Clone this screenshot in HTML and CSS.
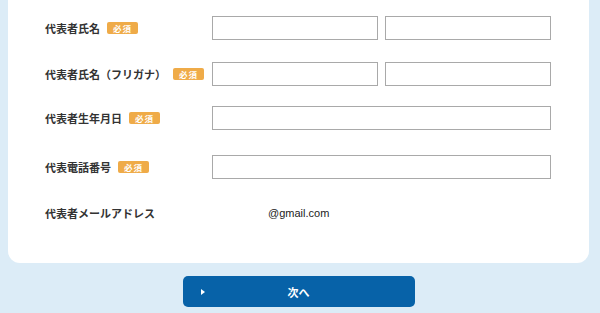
FILE: index.html
```html
<!DOCTYPE html>
<html lang="ja">
<head>
  <meta charset="UTF-8">
  <title>代表者情報</title>
  <link rel="stylesheet" href="styles.css">
</head>
<body>

<div class="form-card">
  <div class="form-row">
    <div class="label">代表者氏名<span class="required">必須</span></div>
    <div class="field split">
      <input type="text">
      <input type="text">
    </div>
  </div>

  <div class="form-row row-tight">
    <div class="label">代表者氏名（フリガナ）<span class="required">必須</span></div>
    <div class="field split">
      <input type="text">
      <input type="text">
    </div>
  </div>

  <div class="form-row row-loose">
    <div class="label">代表者生年月日<span class="required">必須</span></div>
    <div class="field">
      <input type="text">
    </div>
  </div>

  <div class="form-row">
    <div class="label">代表電話番号<span class="required">必須</span></div>
    <div class="field">
      <input type="text">
    </div>
  </div>

  <div class="form-row row-text">
    <div class="label">代表者メールアドレス</div>
    <div class="field value">@gmail.com</div>
  </div>
</div>

<div class="actions">
  <button class="next-btn"><span class="arrow"></span>次へ</button>
</div>

</body>
</html>
```

FILE: styles.css
```css
* {
  margin: 0; padding: 0; box-sizing: border-box;
}
body {
  font-family: "Noto Sans CJK JP", "Noto Sans", sans-serif;
  background: #dcecf7;
  color: #333;
  height: 313px;
  overflow: hidden;
}

.form-card {
  background: #fff;
  margin-left: 8px;
  width: 581px;
  height: 263px;
  padding: 16px 38px 0 37px;
  border-radius: 0 0 12px 12px;
}

.form-row {
  display: grid;
  grid-template-columns: 167px 1fr;
  align-items: center;
  height: 24px;
  margin-bottom: 22px;
}

.form-row.row-tight {
  margin-bottom: 20px;
}

.form-row.row-loose {
  margin-bottom: 25px;
}

.form-row.row-text {
  margin-top: 5px;
}

.label {
  font-size: 11px;
  font-weight: bold;
  display: flex;
  align-items: center;
  white-space: nowrap;
}

.required {
  display: inline-block;
  background: #efab48;
  color: #fff;
  font-size: 8.5px;
  line-height: 12px;
  height: 12px;
  padding: 0 6px;
  margin-left: 7px;
  border-radius: 2px;
  letter-spacing: 1px;
}

.field {
  display: flex;
  gap: 7px;
}

.field input {
  width: 100%;
  height: 24px;
  border: 1px solid #a9a9a9;
  background: #fff;
}

.field.value {
  font-family: "Liberation Sans", sans-serif;
  font-size: 11px;
  padding-left: 56px;
  color: #222;
}

.actions {
  display: flex;
  justify-content: center;
  padding: 13px 0 0 8px;
  width: 589px;
}

.next-btn {
  position: relative;
  width: 232px;
  height: 31px;
  border: none;
  border-radius: 5px;
  background: #0762a8;
  color: #fff;
  font-family: "Noto Sans CJK JP", sans-serif;
  font-size: 11px;
  font-weight: bold;
}

.arrow {
  position: absolute;
  left: 18px;
  top: 13px;
  border-left: 4px solid #fff;
  border-top: 3px solid transparent;
  border-bottom: 3px solid transparent;
}
```
